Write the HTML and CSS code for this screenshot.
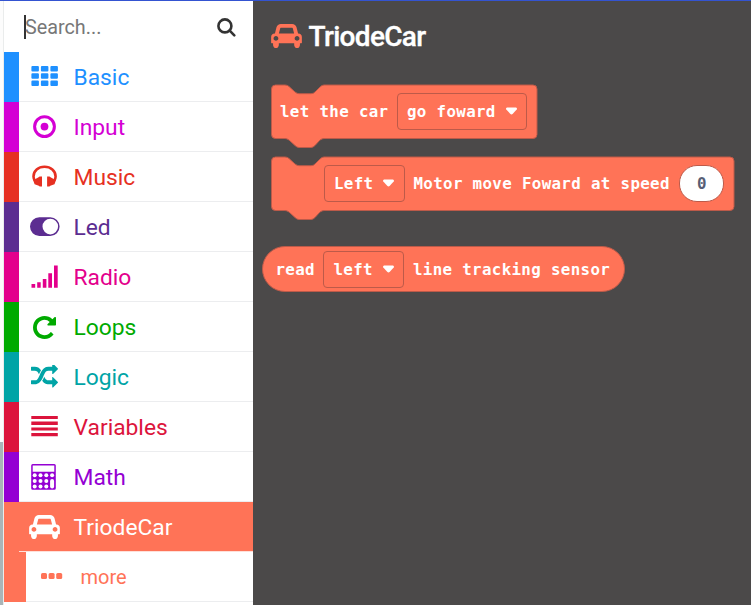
FILE: index.html
```html
<!DOCTYPE html>
<html lang="en">
<head>
<meta charset="utf-8">
<title>Toolbox</title>
<link rel="stylesheet" href="styles.css">
</head>
<body>
<svg class="defs" aria-hidden="true">
  <symbol id="car" viewBox="0 128 2048 1600"><path d="M480 1088q0-66-47-113t-113-47-113 47-47 113 47 113 113 47 113-47 47-113zm36-320h1016l-89-357q-2-8-14-17.500t-21-9.500h-768q-9 0-21 9.500t-14 17.500zm1372 320q0-66-47-113t-113-47-113 47-47 113 47 113 113 47 113-47 47-113zm160-96v384q0 14-9 23t-23 9h-96v128q0 80-56 136t-136 56-136-56-56-136v-128h-1024v128q0 80-56 136t-136 56-136-56-56-136v-128h-96q-14 0-23-9t-9-23v-384q0-93 65.500-158.500t158.500-65.500h28l105-419q23-94 104-157.500t179-63.500h768q98 0 179 63.500t104 157.500l105 419h28q93 0 158.500 65.500t65.500 158.500z"/></symbol>
</svg>
<div class="app">
  <div class="gutter"></div>
  <nav class="toolbox">
    <div class="search">
      <span class="caret"></span><span class="placeholder">Search...</span>
      <svg class="magnifier" viewBox="0 0 19 19"><circle cx="7.900" cy="7.900" r="6.500"/><path d="M12.700 12.700L17.300 17.300"/></svg>
    </div>
    <div class="row basic"><div class="cell"><svg class="icon" viewBox="0 0 32 32"><path d="M3.400 6h5.500q1 0 1 1v3.400q0 1-1 1H3.400q-1 0-1-1V7q0-1 1-1zm9.500 0h5.500q1 0 1 1v3.400q0 1-1 1h-5.500q-1 0-1-1V7q0-1 1-1zm9.500 0h5.500q1 0 1 1v3.400q0 1-1 1h-5.500q-1 0-1-1V7q0-1 1-1zM3.400 13.200h5.500q1 0 1 1v3.500q0 1-1 1H3.400q-1 0-1-1v-3.500q0-1 1-1zm9.500 0h5.500q1 0 1 1v3.500q0 1-1 1h-5.500q-1 0-1-1v-3.500q0-1 1-1zm9.500 0h5.500q1 0 1 1v3.500q0 1-1 1h-5.500q-1 0-1-1v-3.500q0-1 1-1zM3.400 20.600h5.500q1 0 1 1V25q0 1-1 1H3.400q-1 0-1-1v-3.400q0-1 1-1zm9.500 0h5.500q1 0 1 1V25q0 1-1 1h-5.500q-1 0-1-1v-3.400q0-1 1-1zm9.500 0h5.500q1 0 1 1V25q0 1-1 1h-5.500q-1 0-1-1v-3.400q0-1 1-1z"/></svg>Basic</div></div>
    <div class="row input"><div class="cell"><svg class="icon" viewBox="0 0 32 32"><circle class="ring" cx="15.500" cy="16.600" r="9.900"/><circle cx="15.500" cy="16.600" r="3.900"/></svg>Input</div></div>
    <div class="row music"><div class="cell"><svg class="icon" viewBox="0 0 32 32"><path class="band" d="M5.800 20.500Q4.500 18.500 4.500 16.500C4.500 10.800 9.300 6.800 15.500 6.800S26.600 10.800 26.600 16.500Q26.600 18.500 25.300 20.500"/><path d="M4.200 20.300l5.400-3q.4-.8 1.200-.8H13V26.500h-2q-.8 0-1.200-.8L5.600 24.200zM26.900 20.300l-5.400-3q-.4-.8-1.200-.8h-2.200V26.500h2q.8 0 1.200-.8l4.200-1.500z"/></svg>Music</div></div>
    <div class="row led"><div class="cell"><svg class="icon" viewBox="0 0 32 32"><path fill-rule="evenodd" d="M10.300 7.300h11a9.300 9.300 0 0 1 0 18.600h-11a9.300 9.300 0 0 1 0-18.600zm11 1.500a7.800 7.800 0 1 0 0 15.600 7.800 7.800 0 0 0 0-15.600z"/></svg>Led</div></div>
    <div class="row radio"><div class="cell"><svg class="icon" viewBox="0 0 32 32"><path d="M2.500 24h3.700v3.700H2.500zM8.200 22.200h3.500v5.500H8.200zM13.800 19h3.600v8.700h-3.600zM19.300 13.200H23v14.500h-3.700zM25 5.500h3.700v22.200H25z"/></svg>Radio</div></div>
    <div class="row loops"><div class="cell"><svg class="icon glyph" viewBox="128 128 1536 1536"><path d="M1664 256v448q0 26-19 45t-45 19h-448q-42 0-59-40-17-39 14-69l138-138q-148-137-349-137-104 0-198.500 40.500t-163.500 109.500-109.500 163.500-40.500 198.500 40.500 198.500 109.500 163.500 163.500 109.500 198.500 40.500q119 0 225-52t179-147q7-10 23-12 15 0 25 9l137 138q9 8 9.500 20.500t-7.500 22.500q-109 132-264 204.500t-327 72.500q-156 0-298-61t-245-164-164-245-61-298 61-298 164-245 245-164 298-61q147 0 284.500 55.500t244.500 156.500l130-129q29-31 70-14 39 17 39 59z"/></svg>Loops</div></div>
    <div class="row logic"><div class="cell"><svg class="icon shuffle" viewBox="0 160 1792 1472"><path d="M666 481q-60 92-137 273-22-45-37-72.500t-40.500-63.500-51-56.500-63-35-81.500-14.500h-224q-14 0-23-9t-9-23v-192q0-14 9-23t23-9h224q250 0 410 225zm1126 799q0 14-9 23l-320 320q-9 9-23 9-13 0-22.500-9.500t-9.500-22.500v-192q-32 0-85 .5t-81 1-73-1-71-5-64-10.500-63-18.500-58-28.500-59-40-55-53.500-56-69.500q59-93 136-273 22 45 37 72.500t40.500 63.500 51 56.500 63 35 81.500 14.500h256v-192q0-14 9-23t23-9q12 0 24 10l319 319q9 9 9 23zm0-896q0 14-9 23l-320 320q-9 9-23 9-13 0-22.500-9.500t-9.500-22.500v-192h-256q-48 0-87 15t-69 45-51 61.500-45 77.500q-32 62-78 171-29 66-49.500 111t-54 105-64 100-74 83-90 68.500-106.500 42-128 16.500h-224q-14 0-23-9t-9-23v-192q0-14 9-23t23-9h224q48 0 87-15t69-45 51-61.500 45-77.500q32-62 78-171 29-66 49.500-111t54-105 64-100 74-83 90-68.500 106.500-42 128-16.500h256v-192q0-14 9-23t23-9q12 0 24 10l319 319q9 9 9 23z"/></svg>Logic</div></div>
    <div class="row variables"><div class="cell"><svg class="icon" viewBox="0 0 32 32"><path d="M2.300 5.900h26.500v3H2.300zM2.300 11.500h26.500v3.400H2.300zM2.300 17.500h26.500v3H2.300zM2.300 23.100h26.500v3.200H2.300z"/></svg>Variables</div></div>
    <div class="row math"><div class="cell"><svg class="icon" viewBox="0 0 32 32"><path fill-rule="evenodd" d="M3.700 4h21.600q1.500 0 1.500 1.500v22.800q0 1.500-1.500 1.500H3.700q-1.500 0-1.500-1.500V5.500Q2.200 4 3.700 4zm0 1.600v6.200h21.600V5.600z"/><g class="keys"><circle cx="5.700" cy="15.300" r="2"/><circle cx="11.500" cy="15.300" r="2"/><circle cx="17.300" cy="15.300" r="2"/><circle cx="23.100" cy="15.300" r="2"/><circle cx="5.700" cy="21" r="2"/><circle cx="11.500" cy="21" r="2"/><circle cx="17.300" cy="21" r="2"/><circle cx="5.700" cy="26.500" r="2"/><circle cx="11.500" cy="26.500" r="2"/><circle cx="17.300" cy="26.500" r="2"/><rect x="21.100" y="19" width="4" height="9.500" rx="2"/></g></svg>Math</div></div>
    <div class="row triode"><div class="cell"><svg class="icon car"><use href="#car"/></svg>TriodeCar</div></div>
    <div class="row more"><div class="cell"><svg class="icon dots" viewBox="0 0 22 6"><rect width="6" height="6" rx="1.500"/><rect x="7.600" width="6" height="6" rx="1.500"/><rect x="15.200" width="6" height="6" rx="1.500"/></svg>more</div></div>
  </nav>
  <main class="flyout">
    <h1><svg class="title-car"><use href="#car"/></svg>TriodeCar</h1>
    <div class="block drive">
      <svg class="shape" viewBox="0 0 267 64"><path d="M.5 5a4 4 0 0 1 4-4H14q2.500 0 4 1.500L24 8q2 1.700 4 1.700H40q2.500 0 4-1.700L49 3q2-2 4-2H262a4 4 0 0 1 4 4V50.500a4 4 0 0 1-4 4H53q-2 0-4 1.500L44 61.500q-2 2-4 2H28q-2 0-4-2L18 56q-2-1.500-4-1.500H4.500a4 4 0 0 1-4-4z"/></svg>
      <span>let the car</span><span class="select">go foward<svg class="arrow" viewBox="0 0 12 8"><path d="M1.500.5h9q1.500.5.7 2L7.300 6.800Q6 8 4.700 6.800L.8 2.500Q0 1 1.500.5z"/></svg></span>
    </div>
    <div class="block motor">
      <svg class="shape" viewBox="0 0 464 64"><path d="M.5 5a4 4 0 0 1 4-4H14q2.500 0 4 1.500L24 8q2 1.700 4 1.700H40q2.500 0 4-1.700L49 3q2-2 4-2H459a4 4 0 0 1 4 4V50.500a4 4 0 0 1-4 4H53q-2 0-4 1.500L44 61.500q-2 2-4 2H28q-2 0-4-2L18 56q-2-1.500-4-1.500H4.500a4 4 0 0 1-4-4z"/></svg>
      <span class="select">Left<svg class="arrow" viewBox="0 0 12 8"><path d="M1.500.5h9q1.500.5.7 2L7.300 6.800Q6 8 4.700 6.800L.8 2.500Q0 1 1.500.5z"/></svg></span><span>Motor move Foward at speed</span><span class="number">0</span>
    </div>
    <div class="block reporter">
      <span>read</span><span class="select">left<svg class="arrow" viewBox="0 0 12 8"><path d="M1.500.5h9q1.500.5.7 2L7.300 6.800Q6 8 4.700 6.800L.8 2.500Q0 1 1.500.5z"/></svg></span><span>line tracking sensor</span>
    </div>
  </main>
</div>
</body>
</html>
```
FILE: styles.css
```css
* { box-sizing: border-box; }
body { margin: 0; overflow: hidden; font-family: Roboto, sans-serif; }
.defs { position: absolute; width: 0; height: 0; }
.app { display: flex; width: 751px; height: 605px; border-top: 1px solid #3454d1; background: #4b4949; }
.gutter { width: 4px; border-right: 1px solid #eaecec; background: linear-gradient(#fcfcfc 441px, #a9b5b8 441px); }
.toolbox { width: 249px; background: #fff; overflow: hidden; }
.search { display: flex; align-items: center; height: 51px; padding: 2px 17px 0 20px; font-size: 19.8px; color: #777; }
.caret { width: 2px; height: 24px; margin: -2px -1px 0 0; background: #333; }
.placeholder { flex: 1; }
.magnifier { width: 19px; height: 19px; fill: none; stroke: #333; stroke-width: 2.6; stroke-linecap: round; }
.row { height: 50px; border-left: 15px solid; }
.cell { display: flex; align-items: center; height: 50px; padding: 1px 0 0 10px; border-bottom: 1px solid #ecedef; font-size: 22.8px; }
.icon { width: 32px; height: 32px; margin: -2px 12.500px 0 0; fill: currentColor; flex: none; }
.icon .ring { fill: none; stroke: currentColor; stroke-width: 3; }
.icon .band { fill: none; stroke: currentColor; stroke-width: 2.6; }
.icon .keys { fill: #fff; }
.icon.glyph { width: 23px; height: 23px; margin: 0 17.500px 0 4px; }
.icon.shuffle { width: 27px; height: 23px; margin: -1px 15.500px 0 2px; }
.icon.car { width: 31px; height: 24px; margin: 0 13.500px 0 0; }
.icon.dots { width: 22px; height: 6px; margin: -2px 17.500px 0 5px; }
.basic { color: #1e90ff; }
.input { color: #d400d4; }
.music { color: #e63022; }
.led { color: #5c2d91; }
.radio { color: #e3008c; }
.loops { color: #00aa00; }
.logic { color: #00a4a6; }
.variables { color: #dc143c; }
.math { color: #9400d3; }
.triode, .more { border-color: #ff7357; }
.triode .cell { background: #ff7357; color: #fff; border-bottom-color: #ffe0d9; }
.more { border-left-width: 22px; color: #ff7357; }
.more .cell { padding-top: 0; font-size: 20px; }
.flyout { width: 498px; padding: 18px 0 0 18px; }
h1 { display: flex; align-items: center; height: 34px; margin: 0 0 30.500px; color: #fff; font-size: 28px; font-weight: 500; letter-spacing: -.68px; -webkit-text-stroke: .35px #fff; }
.title-car { width: 31px; height: 24px; margin-right: 6.500px; fill: #ff7357; }
.block { position: relative; display: flex; align-items: center; height: 54px; padding-top: 1px; color: #fff; font: bold 15.8px "DejaVu Sans Mono", monospace; letter-spacing: .35px; white-space: pre; }
.block > span { position: relative; }
.shape { position: absolute; left: -.5px; top: 0; height: 64px; fill: #ff7357; stroke: #bd5a49; }
.drive { width: 267px; padding-left: 9px; }
.drive .shape { width: 267px; }
.motor { width: 464px; margin-top: 18px; padding-left: 53px; }
.motor .shape { width: 464px; }
.reporter { width: 363px; height: 46px; margin: 36px 0 0 -9px; padding-left: 12.500px; border: 1px solid #bd5a49; border-radius: 23px; background: #ff7357; }
.select { display: flex; align-items: center; height: 37px; margin: 0 8.500px; padding: 0 8.500px 0 9px; border: 1px solid #bd5a49; border-radius: 4px; }
.motor .select { margin-left: 0; }
.arrow { width: 13px; height: 8px; margin-left: 9px; fill: #fff; }
.number { display: grid; place-items: center; width: 45px; height: 37px; margin-left: 9.500px; border: 1px solid #bd5a49; border-radius: 18px; background: #fff; color: #575e75; }
```
